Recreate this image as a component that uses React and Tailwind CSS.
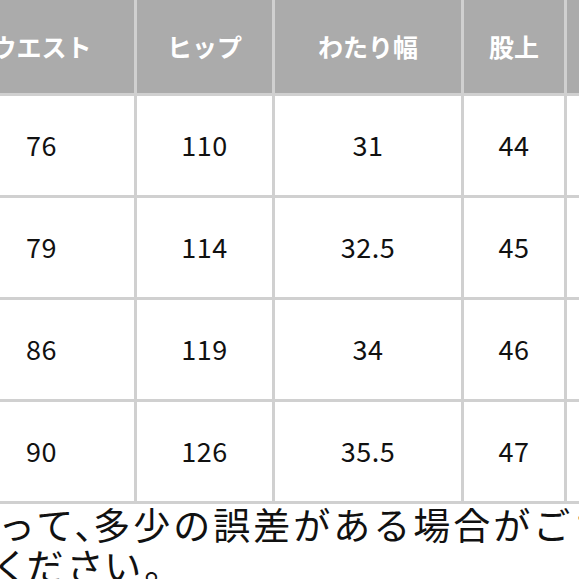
import React from 'react';

const headers = ['ウエスト', 'ヒップ', 'わたり幅', '股上', '股下'];

const rows = [
  ['76', '110', '31', '44', '70'],
  ['79', '114', '32.5', '45', '71'],
  ['86', '119', '34', '46', '72'],
  ['90', '126', '35.5', '47', '73'],
];

export default function App() {
  return (
    <div
      className="w-[579px] h-[579px] overflow-hidden bg-white"
      style={{ fontFamily: '"Noto Sans CJK JP", "Noto Sans", sans-serif' }}
    >
      {/* size table, cropped on both sides */}
      <div className="ml-[-51px] w-[740px] grid grid-cols-[185px_135px_186px_100px_119px] gap-[3px] bg-[#d0d0d0] pb-[3px]">
        {headers.map((h) => (
          <div
            key={h}
            className="h-[93px] bg-[#ababab] flex items-center justify-center text-white text-[25px] font-bold"
          >
            {h}
          </div>
        ))}
        {rows.map((row, i) =>
          row.map((v, j) => (
            <div
              key={`${i}-${j}`}
              className="h-[99px] bg-white flex items-center justify-center text-[27px] text-[#111] tracking-[0.5px]"
            >
              {v}
            </div>
          ))
        )}
      </div>

      <div className="text-[37px] leading-[41px] text-[#111] whitespace-nowrap">
        <div className="ml-[-2px] tracking-[3px]">
          って<span className="mr-[-21px]">、</span>多少の誤差がある場合がございます。
        </div>
        <div className="ml-[-3px] tracking-[4px] [font-feature-settings:'palt']">ください。</div>
      </div>
    </div>
  );
}
